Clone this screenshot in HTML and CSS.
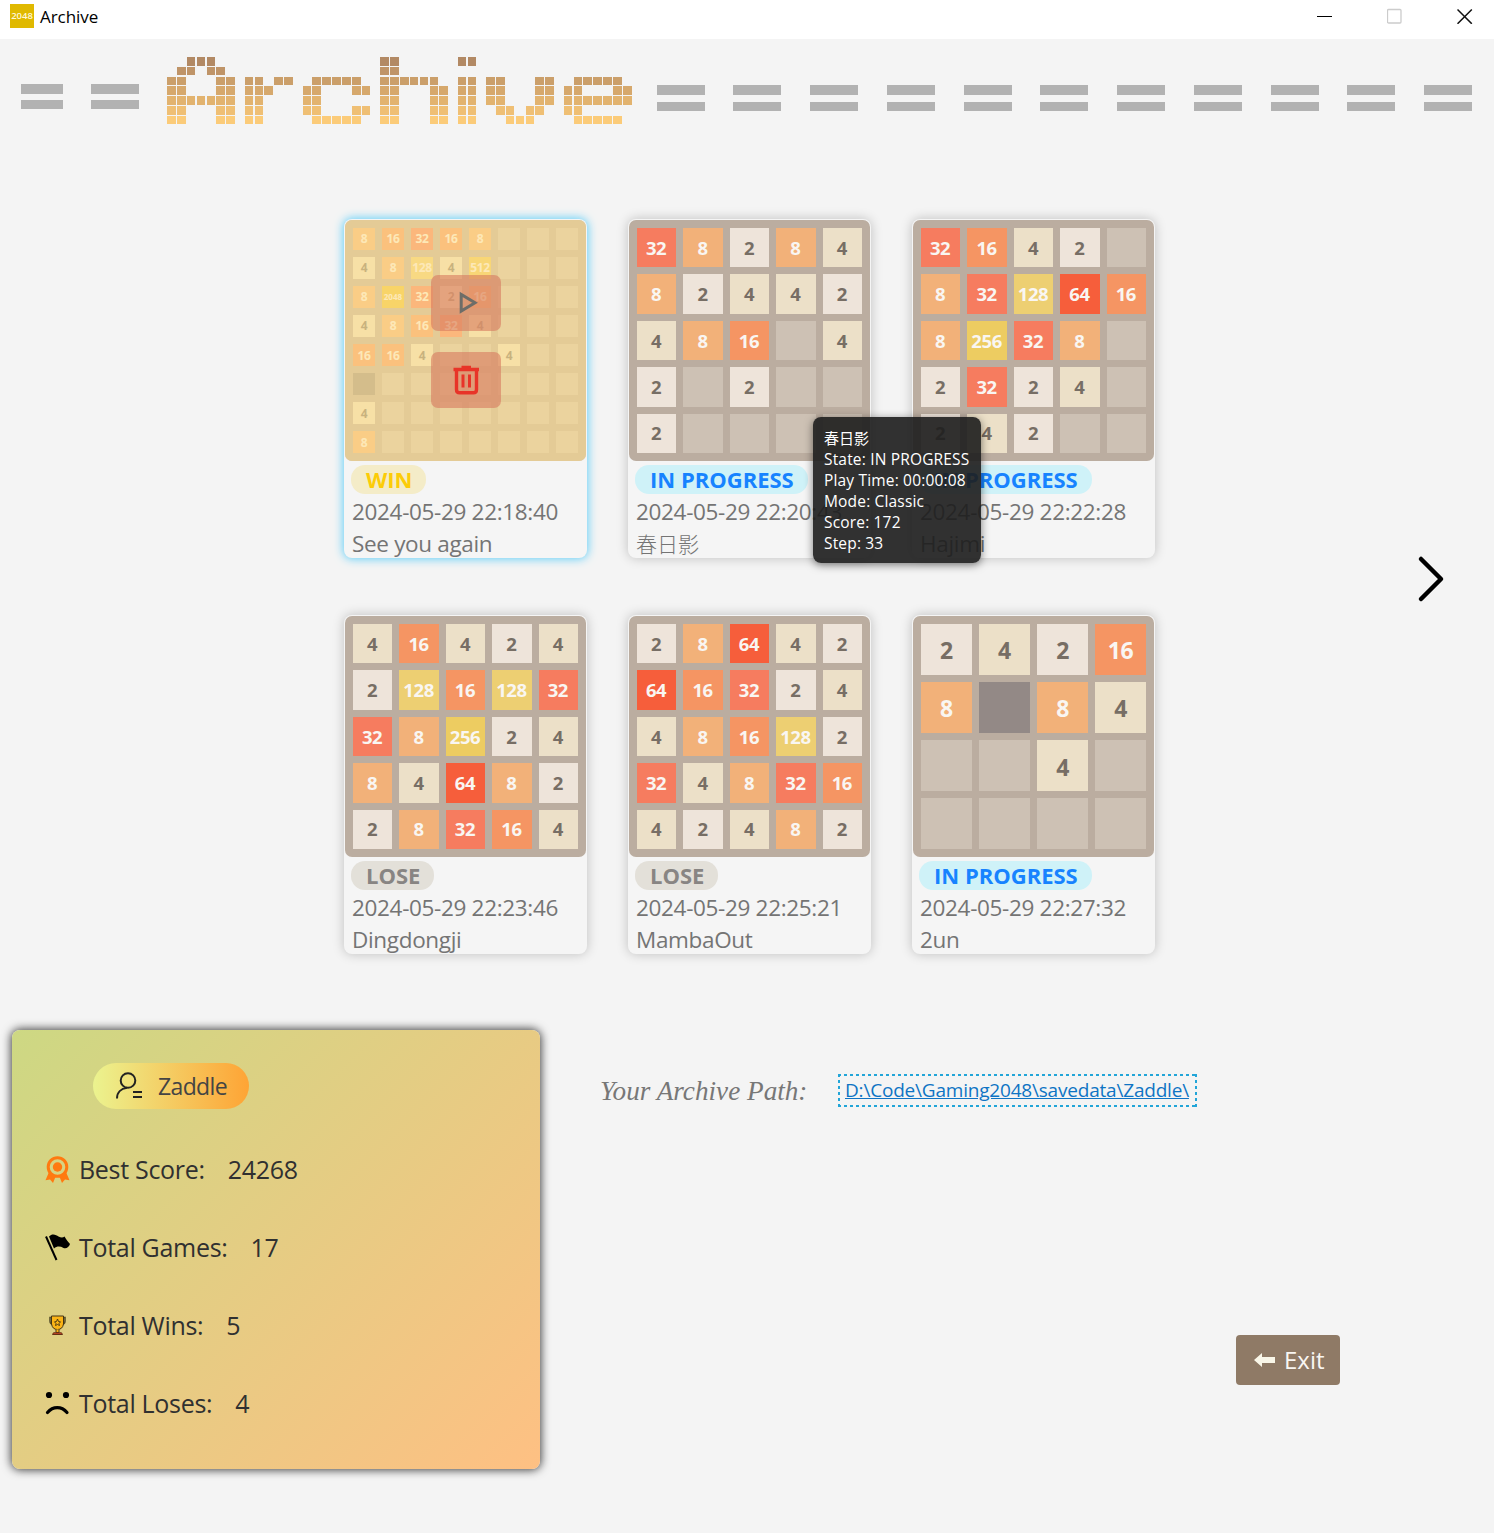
FILE: index.html
```html
<!DOCTYPE html>
<html lang="en">
<head>
<meta charset="utf-8">
<title>Archive</title>
<link rel="stylesheet" href="styles.css">
</head>
<body>
<header class="titlebar">
  <span class="app-icon">2048</span>
  <span class="app-name">Archive</span>
  <div class="window-buttons">
    <svg width="16" height="16" viewBox="0 0 16 16"><path d="M0 8.5H15" stroke="#000"/></svg>
    <svg width="16" height="16" viewBox="0 0 16 16"><rect x=".5" y="1.500" width="13.500" height="13.500" rx="1" fill="none" stroke="#ccc" stroke-width="1.300"/></svg>
    <svg width="16" height="16" viewBox="0 0 16 16"><path d="M.5 1.500L14.800 15.800M14.800 1.500L.5 15.800" stroke="#111" stroke-width="1.500"/></svg>
  </div>
</header>

<section class="banner">
  <div class="bars bars-left"><i></i><i></i></div>
  <div class="logo" id="logo" role="img" aria-label="Archive"></div>
  <div class="bars bars-right"><i></i><i></i><i></i><i></i><i></i><i></i><i></i><i></i><i></i><i></i><i></i></div>
</section>

<main class="gallery">
  <div class="cards">
    <article class="card selected">
      <div class="preview">
        <div class="board" data-rows="8 16 32 16 8 . . .|4 8 128 4 512 . . .|8 2048 32 2 16 . . .|4 8 16 32 4 . . .|16 16 4 . . 4 . .|x . . . . . . .|4 . . . . . . .|8 . . . . . . ."></div>
        <div class="actions">
          <button class="action"><svg width="24" height="24" viewBox="0 0 24 24"><path d="M7.200 3.500V20L21 11.800Z" fill="none" stroke="#6d6d68" stroke-width="3"/></svg></button>
          <button class="action"><svg width="28" height="32" viewBox="0 0 28 32"><path d="M1.500 5.500H27M9.500 3.500H19M4.500 6V25.500Q4.500 28.800 7.500 28.800H21.500Q24.500 28.800 24.500 25.500V6" fill="none" stroke="#e83428" stroke-width="3.400"/><path d="M11 10.500V23.500M17.500 10.500V23.500" stroke="#e83428" stroke-width="3"/></svg></button>
        </div>
      </div>
      <span class="state win">WIN</span>
      <p class="date">2024-05-29 22:18:40</p>
      <p class="name">See you again</p>
    </article>
    <article class="card">
      <div class="board" data-rows="32 8 2 8 4|8 2 4 4 2|4 8 16 . 4|2 . 2 . .|2 . . . ."></div>
      <span class="state progress">IN PROGRESS</span>
      <p class="date">2024-05-29 22:20:43</p>
      <p class="name" lang="ja">春日影</p>
      <div class="tooltip">
        <p lang="ja">春日影</p>
        <p>State: IN PROGRESS</p>
        <p>Play Time: 00:00:08</p>
        <p>Mode: Classic</p>
        <p>Score: 172</p>
        <p>Step: 33</p>
      </div>
    </article>
    <article class="card">
      <div class="board" data-rows="32 16 4 2 .|8 32 128 64 16|8 256 32 8 .|2 32 2 4 .|2 4 2 . ."></div>
      <span class="state progress">IN PROGRESS</span>
      <p class="date">2024-05-29 22:22:28</p>
      <p class="name">Hajimi</p>
    </article>
    <article class="card">
      <div class="board" data-rows="4 16 4 2 4|2 128 16 128 32|32 8 256 2 4|8 4 64 8 2|2 8 32 16 4"></div>
      <span class="state lose">LOSE</span>
      <p class="date">2024-05-29 22:23:46</p>
      <p class="name">Dingdongji</p>
    </article>
    <article class="card">
      <div class="board" data-rows="2 8 64 4 2|64 16 32 2 4|4 8 16 128 2|32 4 8 32 16|4 2 4 8 2"></div>
      <span class="state lose">LOSE</span>
      <p class="date">2024-05-29 22:25:21</p>
      <p class="name">MambaOut</p>
    </article>
    <article class="card">
      <div class="board" data-rows="2 4 2 16|8 x 8 4|. . 4 .|. . . ."></div>
      <span class="state progress">IN PROGRESS</span>
      <p class="date">2024-05-29 22:27:32</p>
      <p class="name">2un</p>
    </article>
  </div>
  <svg class="next" width="30" height="50" viewBox="0 0 30 50"><path d="M5 5L25 25L5 45" fill="none" stroke="#000" stroke-width="4.500" stroke-linecap="round" stroke-linejoin="round"/></svg>
</main>

<footer class="bottom">
  <section class="profile">
    <div class="user">
      <svg width="30" height="30" viewBox="0 0 30 30"><g fill="none" stroke="#222" stroke-width="2"><circle cx="14" cy="9.500" r="7.300"/><path d="M3 27.500C3 21.500 7 17.500 13 16.800M19 21H28M19 26H28"/></g></svg>
      <span>Zaddle</span>
    </div>
    <dl class="stats">
      <div class="stat">
        <svg width="26" height="28" viewBox="0 0 26 28"><circle cx="12.500" cy="12" r="9.300" fill="none" stroke="#ff7a10" stroke-width="3"/><circle cx="12.500" cy="12" r="4.700" fill="#ff7a10"/><path d="M4 17L.5 25.300L5 24.500L8 28L11 20.500ZM21 17L24.500 25.300L20 24.500L17 28L14 20.500Z" fill="#ff7a10"/></svg>
        <dt>Best Score:</dt><dd>24268</dd>
      </div>
      <div class="stat">
        <svg width="26" height="28" viewBox="0 0 26 28"><path d="M1 3.500L11.500 27" stroke="#000" stroke-width="2"/><path d="M4 3.500C7 0 11 1.500 13.500 3.500C16 4.800 18 4.800 19.500 3.500C21 6 23 9 25 11C24 14 21.500 16 18.500 15C15 13 12 13 9 15.500Z"/></svg>
        <dt>Total Games:</dt><dd>17</dd>
      </div>
      <div class="stat">
        <svg width="26" height="28" viewBox="0 0 26 28"><path d="M8 6.500H5V10Q5 13 8.500 13.500M17 6.500H20V10Q20 13 16.500 13.500" fill="none" stroke="#57502c" stroke-width="1.600"/><path d="M6.500 5H18.500V13Q17.500 18.500 12.500 18.500Q7.500 18.500 6.500 13Z" fill="#fbb416" stroke="#443414"/><path d="M11 18.500V21.500H14V18.500" fill="#fbb416" stroke="#443414"/><path d="M12.500 8L13.500 10.500L15.500 10.800L14 12.500L14.500 14.500L12.500 13.500L10.500 14.500L11 12.500L9.500 10.800L11.500 10.500Z" fill="none" stroke="#443414" stroke-width=".9"/><path d="M7.500 23.500L8.500 21.800H16.500L17.500 23.500Z" fill="#d84825" stroke="#633016"/></svg>
        <dt>Total Wins:</dt><dd>5</dd>
      </div>
      <div class="stat">
        <svg width="26" height="28" viewBox="0 0 26 28"><circle cx="4" cy="6" r="3.100"/><circle cx="21" cy="6" r="3.100"/><path d="M2.500 23.500C8 17 16.500 17 22 23.500" fill="none" stroke="#000" stroke-width="3.200" stroke-linecap="round"/></svg>
        <dt>Total Loses:</dt><dd>4</dd>
      </div>
    </dl>
  </section>
  <section class="side">
    <div class="path">
      <span class="path-label">Your Archive Path:</span>
      <a class="path-link" href="#">D:\Code\Gaming2048\savedata\Zaddle\</a>
    </div>
    <button class="exit"><svg width="22" height="16" viewBox="0 0 22 16"><path d="M0 8L8 1V5H21V11H8V15Z" fill="#f9f6e8"/></svg><span>Exit</span></button>
  </section>
</footer>
<script src="app.js"></script>
</body>
</html>
```
FILE: styles.css
```css
* { box-sizing: border-box; }
body {
  margin: 0;
  height: 1533px;
  overflow: hidden;
  background: #f4f4f4;
  color: #333;
  font-family: "Open Sans", "Noto Sans CJK SC", sans-serif;
}
p, dl, dd { margin: 0; }
button { border: 0; font: inherit; }
svg { flex: none; display: block; }

.titlebar {
  height: 39px;
  background: #fff;
  display: flex;
  align-items: flex-start;
  padding: 4px 21px 0 10px;
}
.app-icon {
  width: 24px; height: 24px;
  background: #e0b900; color: #fff7d8;
  font-size: 9.500px; font-weight: 600; line-height: 24px; text-align: center;
}
.app-name { margin-left: 6px; font-size: 17px; line-height: 25px; color: #000; letter-spacing: -.05px; }
.window-buttons { margin: 4px 0 0 auto; display: flex; gap: 54px; }

.banner { height: 180px; padding: 18px 0 0 21px; display: flex; align-items: flex-start; }
.bars { display: flex; }
.bars i { width: 48px; height: 26px; border: solid #b2b2b2; border-width: 10px 0 9px; }
.bars-left { gap: 28px; margin: 27px 28px 0 0; }
.bars-left i { height: 25px; }
.bars-left i:first-child { width: 42px; }
.bars-right { gap: 28.75px; margin: 28px 0 0 25px; }
.logo { display: flex; gap: 9.700px; }
.letter { display: grid; gap: 1.200px; grid-auto-columns: 8.690px; grid-template-rows: repeat(7, 8.600px); }

.gallery { height: 811px; padding-left: 344px; display: flex; align-items: flex-start; }
.cards { display: grid; grid-template-columns: repeat(3, 243px); gap: 57px 41px; }
.next { margin: 335px 0 0 261px; }
.card {
  position: relative;
  height: 339px;
  padding: 1px;
  border-radius: 8px;
  background: #f5f5f5;
  box-shadow: 0 0 12px rgba(0, 0, 0, .22);
}
.card.selected { box-shadow: 0 0 10px 1px #62cff8; }
.preview { position: relative; }
.board {
  width: 241px; height: 241px;
  padding: 8px;
  border-radius: 7px;
  background: #bbada0;
  display: grid;
  gap: 7.200px;
  font-weight: 700;
}
.tile {
  display: flex; align-items: center; justify-content: center;
  min-width: 0; min-height: 0;
  background: #cdc1b4; color: #f9f6f2;
  letter-spacing: -.4px;
}
.size-4 { font-size: 23px; }
.size-5 { font-size: 18.500px; }
.size-8 { font-size: 12px; }
.size-4 .tile { padding-top: 2px; }
.size-5 .tile { padding: 0 1px 1px 0; }
.t2 { background: #eee4da; color: #776e65; }
.t4 { background: #ece0c8; color: #776e65; }
.t8 { background: #f2b179; }
.t16 { background: #f59563; }
.t32 { background: #f67c5f; }
.t64 { background: #f65e3b; }
.t128 { background: #edcf72; }
.t256 { background: #edcc61; }
.t512 { background: #edc850; }
.t2048 { background: #edc22e; font-size: 8px; letter-spacing: 0; }
.tx { background: #938986; }
.actions {
  position: absolute;
  inset: 0;
  border-radius: 7px;
  background: rgba(255, 223, 143, .6);
  display: flex;
  flex-direction: column;
  align-items: center;
  gap: 21px;
  padding-top: 55px;
}
.action {
  width: 70px; height: 56px;
  padding: 0;
  border-radius: 7px;
  background: rgba(215, 122, 95, .6);
  display: grid;
  place-items: center;
}
.state {
  display: block;
  width: max-content;
  height: 29px;
  margin: 4px 0 0 6px;
  padding: 0 14px 0 15px;
  border-radius: 14px;
  font-size: 22px;
  font-weight: 700;
  line-height: 29px;
}
.win { background: #f4ecc8; color: #fccc08; }
.progress { background: #cff2f8; color: #1783ff; }
.lose { background: #e3e0d9; color: #888583; }
.date, .name {
  margin-left: 7px;
  font-size: 22.500px; line-height: 32px; letter-spacing: -.33px;
  color: #747474; white-space: nowrap;
}
.name:lang(ja) { font-size: 21px; letter-spacing: 0; font-weight: 300; }
.date { margin-top: 2px; }
.tooltip {
  position: absolute;
  left: 185px; top: 198px;
  z-index: 2;
  width: 168px; height: 146px;
  padding: 11px 11px;
  border-radius: 8px;
  background: rgba(30, 30, 30, .91);
  box-shadow: 0 2px 8px rgba(0, 0, 0, .5);
  color: #fff;
  font-size: 15.500px;
  letter-spacing: .17px;
  line-height: 21px;
  white-space: nowrap;
}
.tooltip :lang(ja) { font-size: 15px; letter-spacing: 0; }

.bottom { display: flex; padding-left: 12px; }
.profile {
  width: 528px; height: 439px;
  border-radius: 8px;
  background: linear-gradient(135deg, #cdd883, #fec083);
  box-shadow: 0 0 10px 1px rgba(0, 0, 0, .75);
  padding: 33px 0 0 33px;
}
.user {
  width: 156px; height: 46px;
  margin-left: 48px;
  padding-left: 21px;
  border-radius: 23px;
  background: linear-gradient(90deg, #ebf38f, #fea435);
  display: flex;
  align-items: center;
  gap: 14px;
  font-size: 23px;
  letter-spacing: -.65px;
  color: #444;
}
.stats { margin-top: 21px; }
.stat { height: 78px; display: flex; align-items: center; font-size: 25px; letter-spacing: -.3px; color: #303030; }
.stat dt { margin-left: 8px; white-space: nowrap; }
.stat dd { margin-left: 23px; }
.side { flex: 1; padding: 44px 154px 0 60px; display: flex; flex-direction: column; align-items: flex-end; }
.path { width: 100%; display: flex; align-items: center; white-space: nowrap; }
.path-label { width: 238px; padding-top: 1px; font: italic 27.200px "Liberation Serif", serif; color: #777; }
.path-link {
  --across: repeating-linear-gradient(90deg, #22a5d8 0 3px, transparent 3px 6px);
  --down: repeating-linear-gradient(#22a5d8 0 3px, transparent 3px 6px);
  width: 359px; height: 33px;
  background:
    var(--across) top / 100% 2px no-repeat,
    var(--across) bottom / 100% 2px no-repeat,
    var(--down) left / 2px 100% no-repeat,
    var(--down) right / 2px 100% no-repeat;
  padding-left: 7px;
  font-size: 19px;
  letter-spacing: -.2px;
  line-height: 32px;
  color: #0f74c4;
}
.exit {
  width: 104px; height: 50px;
  margin-top: 228px;
  padding: 0 0 0 18px;
  border-radius: 4px;
  background: #8f7a66;
  color: #f9f6f2;
  display: flex;
  align-items: center;
  gap: 8px;
  font-size: 24px;
}
.exit span { padding-bottom: 2px; }
```
FILE: app.js
```js
// Block letters of the banner, seven rows each.
const letters = [
  "..###..|.##.##.|##...##|##...##|#######|##...##|##...##",
  ".....|.....|##.##|###..|##...|##...|##...",
  ".......|.......|.#####.|##...##|##.....|##...##|.#####.",
  "##.....|##.....|######.|##...##|##...##|##...##|##...##",
  "##|..|##|##|##|##|##",
  ".......|.......|##...##|##...##|##...##|.##.##.|..###..",
  ".......|.......|.#####.|##...##|#######|##.....|.#####."
];
const shades = ["#b28964", "#bf9468", "#cb9f6a", "#d6a86c", "#e2b36f", "#efbf74", "#fbcb79"];
const logo = document.getElementById("logo");
for (const shape of letters) {
  const letter = document.createElement("div");
  letter.className = "letter";
  shape.split("|").forEach((row, y) => [...row].forEach((mark, x) => {
    const cell = document.createElement("i");
    cell.style.gridArea = `${y + 1} / ${x + 1}`;
    if (mark === "#") cell.style.background = shades[y];
    letter.append(cell);
  }));
  logo.append(letter);
}

// Boards: "." is an empty cell, "x" an obstacle.
for (const board of document.querySelectorAll(".board")) {
  const rows = board.dataset.rows.split("|").map(row => row.split(" "));
  board.classList.add(`size-${rows.length}`);
  board.style.gridTemplate = `repeat(${rows.length}, 1fr) / repeat(${rows.length}, 1fr)`;
  for (const value of rows.flat()) {
    const tile = document.createElement("span");
    tile.className = value === "." ? "tile" : `tile t${value}`;
    if (/\d/.test(value)) tile.textContent = value;
    board.append(tile);
  }
}
```
